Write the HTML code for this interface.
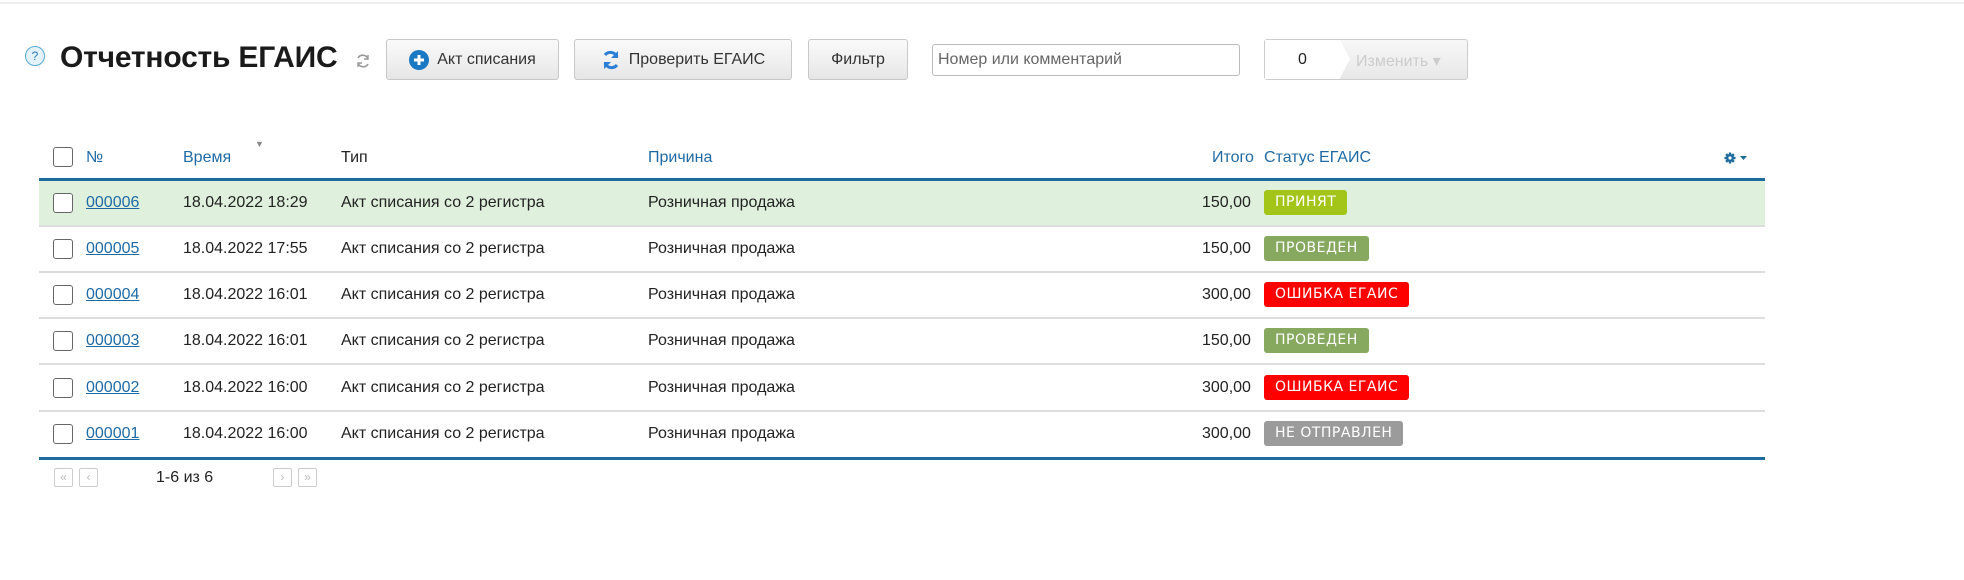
<!DOCTYPE html>
<html><head><meta charset="utf-8">
<style>
*{box-sizing:border-box;margin:0;padding:0}
body{width:1964px;height:580px;background:#fff;font-family:"Liberation Sans",Arial,sans-serif;color:#222;position:relative;overflow:hidden}
.topline{position:absolute;left:0;top:2px;width:1964px;height:2px;background:#eee}
.abs{position:absolute}
.help{left:25px;top:46px;width:20px;height:20px;border-radius:50%;border:1px solid #58a9d6;background:#e3f2fb;color:#2a7ab5;font-size:12px;text-align:center;line-height:18px}
.title{left:60px;top:41px;font-size:30px;font-weight:bold;color:#1a1a1a;letter-spacing:-0.2px}
.btn{position:absolute;top:39px;height:41px;border:1px solid #c8c8c8;border-radius:3px;background:linear-gradient(#fafafa,#e6e6e6);font-size:16px;color:#333;display:flex;align-items:center;justify-content:center;gap:8px}
.input{left:932px;top:44px;width:308px;height:32px;border:1px solid #bbb;border-radius:3px;font-size:16px;color:#666;padding-left:5px;line-height:30px}
.hdr{position:absolute;top:149px;font-size:16px;color:#1f6aa5}
.cb{position:absolute;width:20px;height:20px;border:1.5px solid #666;border-radius:3px;background:#fff}
.row{position:absolute;left:39px;width:1726px;height:46px;border-bottom:2px solid #ddd}
.cell{position:absolute;font-size:16px;color:#222;top:13px}
.num{color:#1f6aa5;text-decoration:underline}
.badge{position:absolute;left:1225px;top:9px;height:25px;border-radius:3px;color:#fff;font-family:"DejaVu Sans",sans-serif;font-size:14px;letter-spacing:0.5px;line-height:25px;padding:0 11px}
.pg{position:absolute;top:468px;width:19px;height:19px;border:1px solid #ccc;border-radius:2px;color:#bbb;font-size:12px;text-align:center;line-height:17px}
</style></head><body>
<div class="topline"></div>
<div class="abs help">?</div>
<div class="abs title">Отчетность ЕГАИС</div>
<svg class="abs" style="left:355px;top:53px" width="16" height="16" viewBox="0 0 16 16"><path d="M13 6A5.5 5.5 0 0 0 3 5M3 10a5.5 5.5 0 0 0 10 1" fill="none" stroke="#999" stroke-width="1.6"/><path d="M13 2v4h-4M3 14v-4h4" fill="none" stroke="#999" stroke-width="1.4"/></svg>
<div class="btn" style="left:386px;width:173px"><svg width="20" height="20" viewBox="0 0 20 20"><circle cx="10" cy="10" r="10" fill="#1b78c2"/><path d="M10 5v10M5 10h10" stroke="#fff" stroke-width="3"/></svg>Акт списания</div>
<div class="btn" style="left:574px;width:218px"><svg width="20" height="22" viewBox="0 0 20 22"><path d="M16 8A7 7 0 0 0 4 6" fill="none" stroke="#2c7fd6" stroke-width="3"/><path d="M17 2v7h-7z" fill="#2c7fd6"/><path d="M4 14a7 7 0 0 0 12 2" fill="none" stroke="#2c7fd6" stroke-width="3"/><path d="M3 20v-7h7z" fill="#2c7fd6"/></svg>Проверить ЕГАИС</div>
<div class="btn" style="left:808px;width:100px">Фильтр</div>
<div class="abs input">Номер или комментарий</div>
<div class="abs" style="left:1264px;top:39px;width:204px;height:41px;border:1px solid #ccc;border-radius:3px;background:linear-gradient(#f7f7f7,#e8e8e8)"></div>
<div class="abs" style="left:1265px;top:40px;width:75px;height:39px;background:#fff;font-size:16px;text-align:center;line-height:39px;color:#222">0</div>
<div class="abs" style="left:1340px;top:40px;width:0;height:0;border-top:19.5px solid transparent;border-bottom:19.5px solid transparent;border-left:10px solid #fff"></div>
<div class="abs" style="left:1356px;top:51px;font-size:16px;color:#ccc">Изменить ▾</div>

<div class="cb" style="left:53px;top:147px"></div>
<div class="hdr" style="left:86px">№</div>
<div class="hdr" style="left:183px">Время</div>
<div class="abs" style="left:255px;top:139px;font-size:9px;color:#888">▼</div>
<div class="hdr" style="left:341px;color:#222">Тип</div>
<div class="hdr" style="left:648px">Причина</div>
<div class="hdr" style="left:1212px">Итого</div>
<div class="hdr" style="left:1264px">Статус ЕГАИС</div>
<svg class="abs" style="left:1724px;top:152px" width="26" height="12" viewBox="0 0 26 12"><g fill="#1d6a9c"><circle cx="6" cy="6" r="4"/><rect x="4.8" y="0.5" width="2.4" height="11"/><rect x="0.5" y="4.8" width="11" height="2.4"/><rect x="4.8" y="0.5" width="2.4" height="11" transform="rotate(45 6 6)"/><rect x="4.8" y="0.5" width="2.4" height="11" transform="rotate(-45 6 6)"/></g><circle cx="6" cy="6" r="1.6" fill="#fff"/><path d="M16 4h7l-3.5 4z" fill="#1d6a9c"/></svg>
<div class="abs" style="left:39px;top:178px;width:1726px;height:3px;background:#1d6a9c"></div>

<div class="row" style="top:181px;background:#dff1dd"><div class="cb" style="left:14px;top:12px"></div><div class="cell num" style="left:47px">000006</div><div class="cell" style="left:144px">18.04.2022 18:29</div><div class="cell" style="left:302px">Акт списания со 2 регистра</div><div class="cell" style="left:609px">Розничная продажа</div><div class="cell" style="left:1163px">150,00</div><div class="badge" style="background:#a3c51a">ПРИНЯТ</div></div>
<div class="row" style="top:227px"><div class="cb" style="left:14px;top:12px"></div><div class="cell num" style="left:47px">000005</div><div class="cell" style="left:144px">18.04.2022 17:55</div><div class="cell" style="left:302px">Акт списания со 2 регистра</div><div class="cell" style="left:609px">Розничная продажа</div><div class="cell" style="left:1163px">150,00</div><div class="badge" style="background:#86a85f">ПРОВЕДЕН</div></div>
<div class="row" style="top:273px"><div class="cb" style="left:14px;top:12px"></div><div class="cell num" style="left:47px">000004</div><div class="cell" style="left:144px">18.04.2022 16:01</div><div class="cell" style="left:302px">Акт списания со 2 регистра</div><div class="cell" style="left:609px">Розничная продажа</div><div class="cell" style="left:1163px">300,00</div><div class="badge" style="background:#ff0000">ОШИБКА ЕГАИС</div></div>
<div class="row" style="top:319px"><div class="cb" style="left:14px;top:12px"></div><div class="cell num" style="left:47px">000003</div><div class="cell" style="left:144px">18.04.2022 16:01</div><div class="cell" style="left:302px">Акт списания со 2 регистра</div><div class="cell" style="left:609px">Розничная продажа</div><div class="cell" style="left:1163px">150,00</div><div class="badge" style="background:#86a85f">ПРОВЕДЕН</div></div>
<div class="row" style="top:366px"><div class="cb" style="left:14px;top:12px"></div><div class="cell num" style="left:47px">000002</div><div class="cell" style="left:144px">18.04.2022 16:00</div><div class="cell" style="left:302px">Акт списания со 2 регистра</div><div class="cell" style="left:609px">Розничная продажа</div><div class="cell" style="left:1163px">300,00</div><div class="badge" style="background:#ff0000">ОШИБКА ЕГАИС</div></div>
<div class="row" style="top:412px;border-bottom:none"><div class="cb" style="left:14px;top:12px"></div><div class="cell num" style="left:47px">000001</div><div class="cell" style="left:144px">18.04.2022 16:00</div><div class="cell" style="left:302px">Акт списания со 2 регистра</div><div class="cell" style="left:609px">Розничная продажа</div><div class="cell" style="left:1163px">300,00</div><div class="badge" style="background:#9b9b9b">НЕ ОТПРАВЛЕН</div></div>
<div class="abs" style="left:39px;top:457px;width:1726px;height:3px;background:#1d6a9c"></div>

<div class="pg" style="left:54px">«</div>
<div class="pg" style="left:79px">‹</div>
<div class="abs" style="left:156px;top:469px;font-size:16px;color:#222">1-6 из 6</div>
<div class="pg" style="left:273px">›</div>
<div class="pg" style="left:298px">»</div>
</body></html>
